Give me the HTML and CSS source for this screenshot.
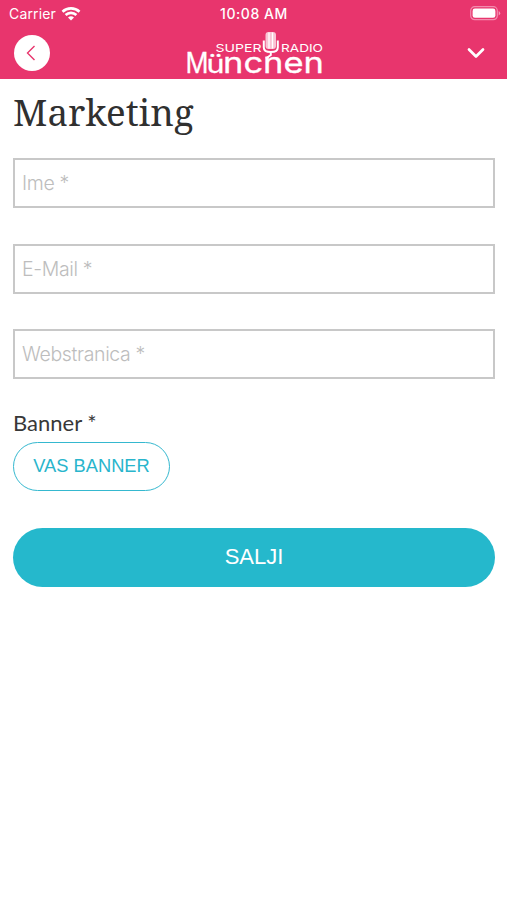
FILE: index.html
```html
<!DOCTYPE html>
<html lang="bs">
<head>
<meta charset="utf-8">
<title>Marketing</title>
<link rel="stylesheet" href="styles.css">
</head>
<body>
<header class="header">
  <div class="status">
    <div class="carrier">Carrier
      <svg class="wifi" width="20" height="14" viewBox="0 0 20 14" fill="none" stroke="#fff" stroke-width="2.6"><path d="M1.500 4.800a12.300 12.300 0 0 1 17 0M4.600 8a7.800 7.800 0 0 1 10.800 0"/><path d="M10 13.500 7 10.600a4.300 4.300 0 0 1 6 0z" fill="#fff" stroke="none"/></svg>
    </div>
    <div class="time">10:08 AM</div>
    <svg class="battery" width="31" height="15" viewBox="0 0 31 15"><rect x=".7" y=".7" width="26.6" height="13" rx="4" fill="none" stroke="#f28bae" stroke-width="1.2"/><rect x="2.600" y="2.600" width="22.800" height="9.200" rx="2.300" fill="#fff"/><path d="M28.700 5v4.600q1.500-.8 1.500-2.300T28.700 5z" fill="#f59ab8"/></svg>
  </div>
  <nav class="nav">
    <button class="back" aria-label="Nazad"><svg width="36" height="36" viewBox="0 0 36 36" fill="none" stroke="#e8356d" stroke-width="1.400"><path d="m20.500 11-7 7 7 7"/></svg></button>
    <svg class="logo" width="140" height="46" viewBox="185 30 140 46" fill="#fff">
      <text class="logo-small" x="216.500" y="52" textLength="46" lengthAdjust="spacingAndGlyphs">SUPER</text>
      <text class="logo-small" x="282" y="52" textLength="42" lengthAdjust="spacingAndGlyphs">RADIO</text>
      <text class="logo-big" x="186.500" y="73" textLength="23" lengthAdjust="spacingAndGlyphs">M</text>
      <text class="logo-big logo-umlaut" x="207.500" y="73" textLength="18" lengthAdjust="spacingAndGlyphs">ü</text>
      <text class="logo-big" x="224" y="73" textLength="101" lengthAdjust="spacingAndGlyphs">nchen</text>
      <rect x="262.500" y="30" width="18.500" height="26.500" fill="#e8356d"/>
      <rect x="266.500" y="32" width="10.500" height="17" rx="3" fill="#f9c3d4"/>
      <path d="M270 32.500v16M273.500 32.500v16" stroke="#fff" stroke-width="1.300"/>
      <path d="M264.800 40.500v7q0 4.500 7 4.500t7-4.500v-7M271.800 52v3l-5 3.500" fill="none" stroke="#fff" stroke-width="2"/>
    </svg>
    <button class="more" aria-label="Meni"><svg width="18" height="12" viewBox="0 0 18 12" fill="none" stroke="#fff" stroke-width="2.700" stroke-linecap="round" stroke-linejoin="round"><path d="m2 2.500 7 7 7-7"/></svg></button>
  </nav>
</header>
<main class="content">
  <h1 class="title">Marketing</h1>
  <form class="form">
    <input class="field" placeholder="Ime *">
    <input class="field" placeholder="E-Mail *">
    <input class="field" placeholder="Webstranica *">
    <div class="label">Banner *</div>
    <button type="button" class="upload">VAS BANNER</button>
    <button type="button" class="submit">SALJI</button>
  </form>
</main>
</body>
</html>
```
FILE: styles.css
```css
* { box-sizing: border-box; }
body { margin: 0; min-height: 900px; background: #fff; font-family: "Liberation Sans", sans-serif; color: #333; }
button { margin: 0; padding: 0; border: 0; background: none; font-family: inherit; }
svg { display: block; }
.header { height: 79px; background: #e8356d; color: #fff; }
.status { display: grid; grid-template-columns: 1fr auto 1fr; align-items: center; height: 27px; padding: 0 6px 0 9px; font: 400 14px/27px Inter, sans-serif; }
.carrier { display: flex; align-items: center; gap: 5px; letter-spacing: .15px; }
.time { font-weight: 500; font-size: 14px; letter-spacing: .55px; margin-right: 2px; }
.battery { justify-self: end; }
.nav { display: grid; grid-template-columns: 36px 140px 36px; justify-content: space-between; height: 52px; padding: 0 13px 0 14px; }
.back { width: 36px; height: 36px; margin-top: 8px; border-radius: 50%; background: #fff; }
.logo { margin-top: 3px; overflow: visible; }
.logo-small { font: 400 11px Inter, sans-serif; }
.logo-big { font: 400 29px Inter, sans-serif; stroke: #fff; stroke-width: .3px; }
.logo-umlaut { font-size: 25px; }
.more { height: 36px; margin-top: 8px; display: grid; place-items: center; }
.content { padding: 0 12px 0 13px; }
.title { margin: 0; height: 79px; padding-top: 9px; font: 400 36.700px/48px "Noto Serif", "Droid Serif", "DejaVu Serif Condensed", "DejaVu Serif", serif; color: #303030; }
.form { display: flex; flex-direction: column; align-items: flex-start; }
.field { width: 100%; height: 50px; margin: 0 0 35.600px; padding: 0 7px; border: 2px solid #c8c8c8; border-radius: 0; background: #fff; font: 300 19.500px Inter, sans-serif; letter-spacing: -.35px; color: #333; }
.field::placeholder { color: #bdbdbd; opacity: 1; }
.label { height: 27px; font: 400 22px/15px Lato, sans-serif; color: #383838; }
.upload { width: 157px; height: 49px; border: 1.500px solid #35b8cf; border-radius: 25px; color: #29b5cc; font-size: 18.300px; }
.submit { width: 100%; height: 59px; margin-top: 37px; border-radius: 30px; background: #25b8cc; color: #fff; font-size: 22px; }
```
